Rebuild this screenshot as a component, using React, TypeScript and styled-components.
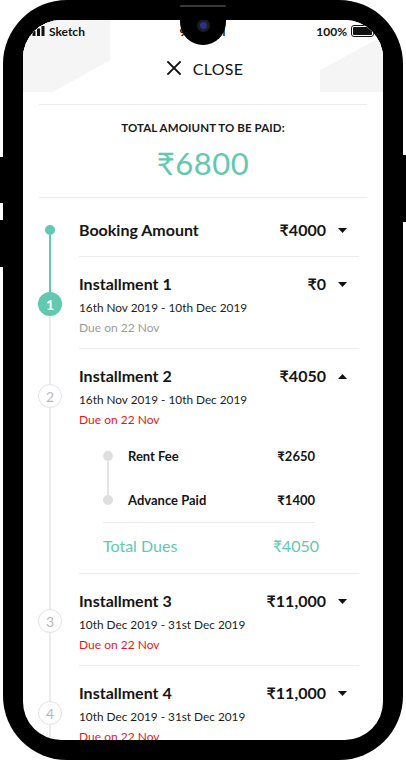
import React from 'react';
import styled, { createGlobalStyle, css } from 'styled-components';

const teal = '#62c8b0';
const line = '#ececec';

const GlobalStyle = createGlobalStyle`
  html, body {
    margin: 0;
    padding: 0;
    background: #ffffff;
    overflow: hidden;
  }
  body {
    font-family: 'Lato', 'Noto Sans', sans-serif;
    color: #151515;
  }
  * {
    box-sizing: border-box;
  }
`;

const Phone = styled.div`
  position: relative;
  width: 400px;
  height: 760px;
  margin-left: 3px;
  padding: 20px;
  background: #000;
  border-radius: 64px;
`;

const SideButton = styled.div<{ $side: 'left' | 'right'; $top: number; $height: number }>`
  position: absolute;
  top: ${(p) => p.$top}px;
  height: ${(p) => p.$height}px;
  width: 4px;
  background: #000;
  ${(p) => (p.$side === 'left' ? 'left: -3px;' : 'right: -3px;')}
`;

const Speaker = styled.div`
  position: absolute;
  top: 5px;
  left: 177px;
  width: 46px;
  height: 2px;
  border-radius: 1px;
  background: #3a3a3a;
`;

const Screen = styled.div`
  position: relative;
  width: 360px;
  height: 720px;
  overflow: hidden;
  background: #fff;
  border-radius: 38px;
`;

const Notch = styled.div`
  position: absolute;
  z-index: 5;
  top: -10px;
  left: 157px;
  width: 46px;
  height: 35px;
  background: #000;
  border-radius: 0 0 23px 23px;
  display: flex;
  justify-content: center;
  padding-top: 9px;
`;

const Camera = styled.div`
  width: 13px;
  height: 13px;
  border-radius: 50%;
  background: #2b3380;
  border: 3px solid #1c1c22;
`;

const Header = styled.header`
  position: relative;
  height: 72px;
  display: flex;
  flex-direction: column;
  background: #fff;

  &::before,
  &::after {
    content: '';
    position: absolute;
    inset: 0;
    background: #f5f5f5;
  }
  &::before {
    clip-path: polygon(0 0, 87px 0, 87px 40px, 30px 72px, 0 72px);
  }
  &::after {
    clip-path: polygon(297px 72px, 297px 50px, 360px 16px, 360px 72px);
  }
`;

const StatusBar = styled.div`
  position: relative;
  z-index: 1;
  height: 22px;
  padding: 0 6px 0 5px;
  display: grid;
  grid-template-columns: 1fr auto 1fr;
  align-items: center;
  font-size: 12px;
  font-weight: 700;
  color: #111;
`;

const StatusLeft = styled.div`
  display: flex;
  align-items: center;
  gap: 4px;
`;

const StatusRight = styled.div`
  display: flex;
  align-items: center;
  justify-content: flex-end;
  gap: 4px;
`;

const CloseRow = styled.button`
  position: relative;
  z-index: 1;
  flex: 1;
  display: flex;
  align-items: center;
  justify-content: center;
  gap: 12px;
  border: none;
  background: transparent;
  font-family: inherit;
  font-size: 16px;
  letter-spacing: 0.3px;
  color: #111;
  padding: 2px 0 0 4px;
`;

const Summary = styled.section`
  margin: 12px 16px 0;
  padding: 15px 0 16px;
  border-top: 1px solid ${line};
  border-bottom: 1px solid ${line};
  text-align: center;
`;

const SummaryLabel = styled.div`
  font-size: 11.5px;
  line-height: 16px;
  font-weight: 700;
  letter-spacing: 0.1px;
  color: #1a1a1a;
`;

const SummaryAmount = styled.div`
  margin-top: 9px;
  font-size: 31px;
  line-height: 36px;
  color: ${teal};
  letter-spacing: 0.5px;
`;

const Row = styled.div`
  display: grid;
  grid-template-columns: 54px 1fr;
  column-gap: 2px;
  margin-right: 24px;
`;

const Marker = styled.div`
  display: flex;
  flex-direction: column;
  align-items: center;
`;

const Segment = styled.div<{ $color?: string; $height?: number }>`
  width: 2px;
  background: ${(p) => p.$color || 'transparent'};
  ${(p) => (p.$height !== undefined ? `height: ${p.$height}px;` : 'flex: 1;')}
`;

const Dot = styled.div<{ $size: number; $color: string }>`
  width: ${(p) => p.$size}px;
  height: ${(p) => p.$size}px;
  border-radius: 50%;
  background: ${(p) => p.$color};
  flex-shrink: 0;
`;

const StepCircle = styled.div<{ $done?: boolean }>`
  width: 24px;
  height: 24px;
  flex-shrink: 0;
  border-radius: 50%;
  display: flex;
  align-items: center;
  justify-content: center;
  font-size: 14px;
  ${(p) =>
    p.$done
      ? css`
          background: ${teal};
          color: #fff;
          font-weight: 700;
        `
      : css`
          background: #fff;
          border: 1.5px solid #e2e2e2;
          color: #b8b8b8;
        `}
`;

const Body = styled.div<{ $compact?: boolean }>`
  padding: ${(p) => (p.$compact ? '21px 12px 15px 0' : '16px 12px 10px 0')};
  border-bottom: 1px solid ${line};
`;

const Head = styled.div`
  display: flex;
  align-items: center;
  justify-content: space-between;
  line-height: 22px;
  font-size: 16px;
  font-weight: 700;
  color: #151515;
`;

const Amount = styled.div`
  display: flex;
  align-items: center;
  gap: 12px;
`;

const Dates = styled.div`
  margin-top: 3px;
  font-size: 11.8px;
  line-height: 20px;
  color: #1c1c1c;
`;

const Due = styled.div<{ $late?: boolean }>`
  font-size: 12px;
  line-height: 20px;
  color: ${(p) => (p.$late ? '#e8161c' : '#9b9b9b')};
`;

const Breakdown = styled.div`
  margin: 4px 32px 0 24px;
`;

const SubList = styled.div`
  border-bottom: 1px solid ${line};
`;

const SubRow = styled.div`
  display: grid;
  grid-template-columns: 10px 1fr auto;
  column-gap: 15px;
  height: 44px;
  font-size: 13px;
  font-weight: 700;
  color: #151515;
`;

const SubText = styled.div`
  align-self: center;
`;

const TotalRow = styled.div`
  display: flex;
  justify-content: space-between;
  padding: 12px 0 6px;
  margin-right: -4px;
  font-size: 16px;
  line-height: 22px;
  color: ${teal};
`;

const Caret = ({ up }: { up?: boolean }) => (
  <svg width="9" height="5" viewBox="0 0 9 5">
    <path d={up ? 'M0 5 L9 5 L4.5 0 Z' : 'M0 0 L9 0 L4.5 5 Z'} fill="#111" />
  </svg>
);

const CloseIcon = () => (
  <svg width="14" height="14" viewBox="0 0 14 14">
    <path d="M1 1 L13 13 M13 1 L1 13" stroke="#111" strokeWidth="1.8" strokeLinecap="square" />
  </svg>
);

const Signal = () => (
  <svg width="17" height="10" viewBox="0 0 17 10">
    <rect x="0" y="7" width="3" height="3" fill="#111" />
    <rect x="4.5" y="5" width="3" height="5" fill="#111" />
    <rect x="9" y="2.5" width="3" height="7.5" fill="#111" />
    <rect x="13.5" y="0" width="3" height="10" fill="#111" />
  </svg>
);

const Battery = () => (
  <svg width="26" height="12" viewBox="0 0 26 12">
    <rect x="0.5" y="0.5" width="22" height="11" rx="2.5" fill="none" stroke="#111" />
    <rect x="2" y="2" width="19" height="8" rx="1" fill="#111" />
    <rect x="23.5" y="4" width="2" height="4" rx="1" fill="#111" />
  </svg>
);

type Installment = {
  step: number;
  title: string;
  amount: string;
  dates: string;
  late: boolean;
  done?: boolean;
  open?: boolean;
};

const installments: Installment[] = [
  { step: 1, title: 'Installment 1', amount: '₹0', dates: '16th Nov 2019 - 10th Dec 2019', late: false, done: true },
  { step: 2, title: 'Installment 2', amount: '₹4050', dates: '16th Nov 2019 - 10th Dec 2019', late: true, open: true },
  { step: 3, title: 'Installment 3', amount: '₹11,000', dates: '10th Dec 2019 - 31st Dec 2019', late: true },
  { step: 4, title: 'Installment 4', amount: '₹11,000', dates: '10th Dec 2019 - 31st Dec 2019', late: true },
];

const breakdown = [
  { label: 'Rent Fee', value: '₹2650' },
  { label: 'Advance Paid', value: '₹1400' },
];

const App = () => {
  return (
    <>
      <GlobalStyle />
      <Phone>
        <SideButton $side="left" $top={157} $height={46} />
        <SideButton $side="left" $top={220} $height={47} />
        <SideButton $side="right" $top={155} $height={67} />
        <Speaker />
        <Screen>
          <Notch>
            <Camera />
          </Notch>
          <Header>
            <StatusBar>
              <StatusLeft>
                <Signal />
                <span>Sketch</span>
              </StatusLeft>
              <span>9:41 AM</span>
              <StatusRight>
                <span>100%</span>
                <Battery />
              </StatusRight>
            </StatusBar>
            <CloseRow>
              <CloseIcon />
              CLOSE
            </CloseRow>
          </Header>

          <Summary>
            <SummaryLabel>TOTAL AMOIUNT TO BE PAID:</SummaryLabel>
            <SummaryAmount>₹6800</SummaryAmount>
          </Summary>

          <Row>
            <Marker>
              <Segment $height={27} />
              <Dot $size={10} $color={teal} />
              <Segment $color={teal} />
            </Marker>
            <Body $compact>
              <Head>
                <span>Booking Amount</span>
                <Amount>
                  ₹4000
                  <Caret />
                </Amount>
              </Head>
            </Body>
          </Row>

          {installments.map((item) => (
            <Row key={item.step}>
              <Marker>
                <Segment $height={35} $color={item.step === 1 ? teal : line} />
                <StepCircle $done={item.done}>{item.step}</StepCircle>
                <Segment $color={line} />
              </Marker>
              <Body>
                <Head>
                  <span>{item.title}</span>
                  <Amount>
                    {item.amount}
                    <Caret up={item.open} />
                  </Amount>
                </Head>
                <Dates>{item.dates}</Dates>
                <Due $late={item.late}>Due on 22 Nov</Due>
                {item.open && (
                  <Breakdown>
                    <SubList>
                      {breakdown.map((b, i) => (
                        <SubRow key={b.label}>
                          <Marker>
                            <Segment $height={17} $color={i === 0 ? undefined : '#e4e4e4'} />
                            <Dot $size={10} $color="#dedede" />
                            <Segment $color={i === breakdown.length - 1 ? undefined : '#e4e4e4'} />
                          </Marker>
                          <SubText>{b.label}</SubText>
                          <SubText>{b.value}</SubText>
                        </SubRow>
                      ))}
                    </SubList>
                    <TotalRow>
                      <span>Total Dues</span>
                      <span>₹4050</span>
                    </TotalRow>
                  </Breakdown>
                )}
              </Body>
            </Row>
          ))}
        </Screen>
      </Phone>
    </>
  );
};

export default App;
